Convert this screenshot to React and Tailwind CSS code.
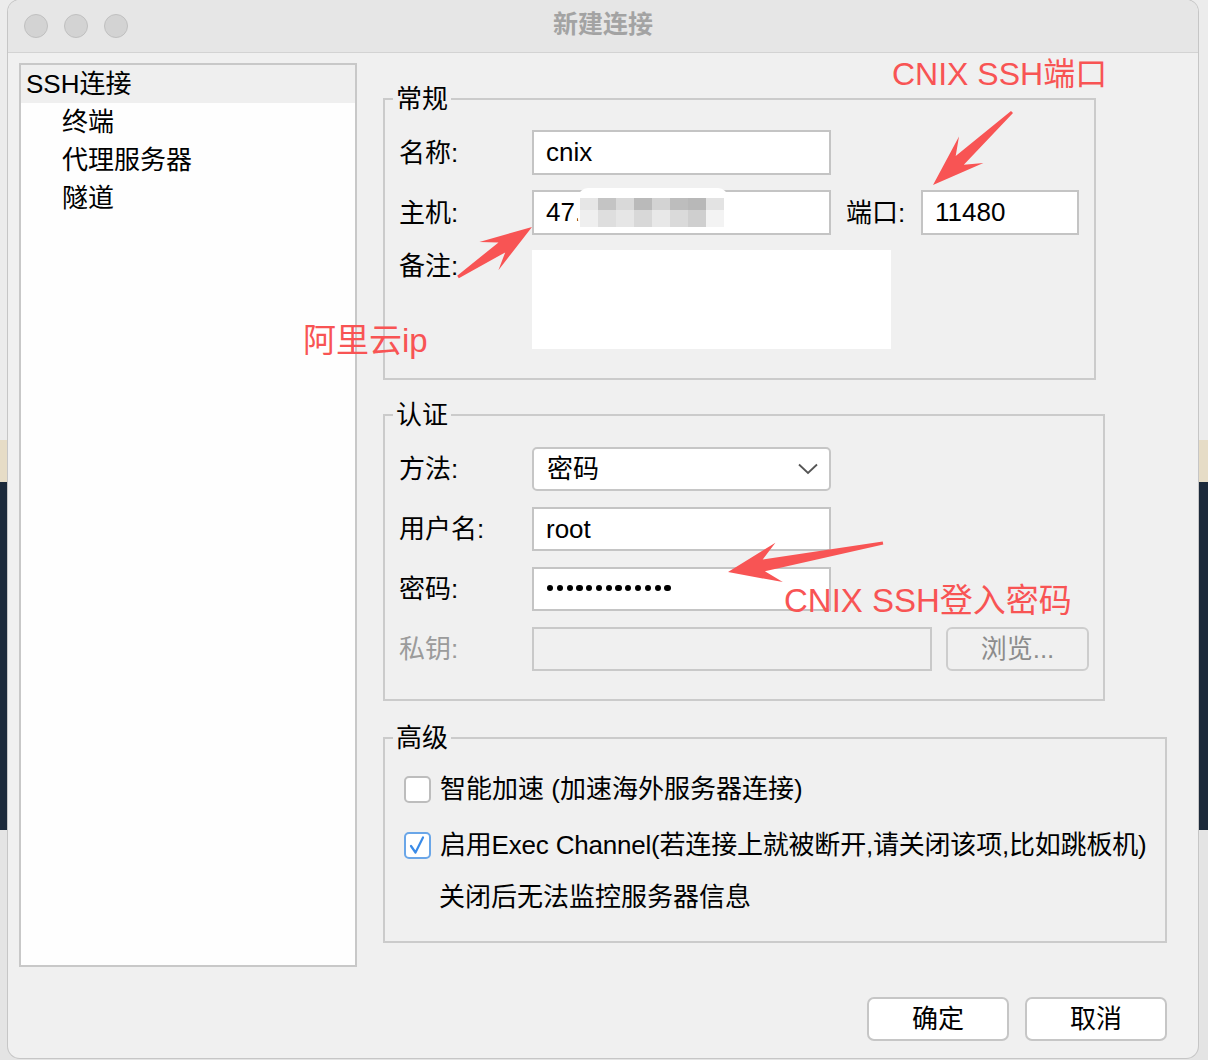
import React from "react";

const FONT = "font-['Liberation_Sans','Noto_Sans_CJK_SC',sans-serif]";
const RED = "#f85454";

// tapered annotation arrow, tail -> tip, in page coordinates
function arrowPoints(tail, tip, L = 52, W = 18, w = 6) {
  const dx = tip[0] - tail[0];
  const dy = tip[1] - tail[1];
  const len = Math.hypot(dx, dy);
  const ux = dx / len;
  const uy = dy / len;
  const nx = -uy;
  const ny = ux;
  const bx = tip[0] - ux * L;
  const by = tip[1] - uy * L;
  const kx = tip[0] - ux * L * 0.7;
  const ky = tip[1] - uy * L * 0.7;
  const pts = [
    [tail[0] + nx * 1.5, tail[1] + ny * 1.5],
    [kx + nx * w, ky + ny * w],
    [bx + nx * W, by + ny * W],
    tip,
    [bx - nx * W, by - ny * W],
    [kx - nx * w, ky - ny * w],
    [tail[0] - nx * 1.5, tail[1] - ny * 1.5],
  ];
  return pts.map((p) => p.map((v) => v.toFixed(1)).join(",")).join(" ");
}

const mosaicTop = ["#e6e6e6", "#c4c4c4", "#d9d9d9", "#bababa", "#d3d3d3", "#bdbdbd", "#b8b8b8", "#e3e3e3"];
const mosaicBottom = ["#efefef", "#dedede", "#e6e6e6", "#d8d8d8", "#e8e8e8", "#dadada", "#cfcfcf", "#f3f3f3"];

function TitleBar() {
  return (
    <div className="h-[53px] shrink-0 bg-[#e6e6e6] border-b border-[#d3d3d3] grid grid-cols-[1fr_auto_1fr] items-center">
      <div className="flex gap-[16px] pl-[16px]">
        {[0, 1, 2].map((i) => (
          <span key={i} className="w-[24px] h-[24px] rounded-full bg-[#d3d3d3] border border-[#c0c0c0]" />
        ))}
      </div>
      <div className="text-[25px] leading-[30px] font-semibold text-[#a3a3a3] -mt-[4px]">新建连接</div>
      <div />
    </div>
  );
}

function Sidebar() {
  const items = ["终端", "代理服务器", "隧道"];
  return (
    <div className="w-[338px] h-[904px] shrink-0 border-2 border-[#c8c8c8] bg-[#fefefe]">
      <div className="h-[38px] bg-[#efefef] pl-[5px] flex items-center text-[26px] text-black">SSH连接</div>
      {items.map((t) => (
        <div key={t} className="h-[38px] pl-[41px] flex items-center text-[26px] text-black">
          {t}
        </div>
      ))}
    </div>
  );
}

function Group({ title, className = "", children }) {
  return (
    <fieldset className={`border-2 border-[#cbcbcb] ${className}`}>
      <legend className="ml-[8px] px-[3px] text-[26px] leading-[30px] text-black">{title}</legend>
      {children}
    </fieldset>
  );
}

function Label({ children, gray = false, w = "w-[133px]" }) {
  return (
    <div className={`${w} shrink-0 text-[26px] leading-[30px] ${gray ? "text-[#9b9b9b]" : "text-black"}`}>
      {children}
    </div>
  );
}

function TextBox({ children, w = "w-[299px]", h = "h-[45px]", className = "" }) {
  return (
    <div className={`relative ${w} ${h} border-2 border-[#c4c4c4] bg-white pl-[12px] flex items-center text-[26px] text-black ${className}`}>
      {children}
    </div>
  );
}

function Mosaic() {
  return (
    <div className="absolute left-[44px] -top-[4px] w-[150px] h-[42px] rounded-[10px] bg-white pt-[10px] pl-[2px]">
      <div className="flex">
        {mosaicTop.map((c, i) => (
          <div key={i} className="w-[18px] h-[12px]" style={{ background: c }} />
        ))}
      </div>
      <div className="flex">
        {mosaicBottom.map((c, i) => (
          <div key={i} className="w-[18px] h-[17px]" style={{ background: c }} />
        ))}
      </div>
    </div>
  );
}

function General() {
  return (
    <Group title="常规" className="w-[713px]">
      <div className="pt-[16px] pb-[29px] pl-[14px] flex flex-col gap-[15px]">
        <div className="flex items-center h-[45px]">
          <Label>名称:</Label>
          <TextBox>cnix</TextBox>
        </div>
        <div className="flex items-center h-[45px]">
          <Label>主机:</Label>
          <TextBox>
            47.
            <Mosaic />
          </TextBox>
          <div className="ml-[15px] w-[75px] text-[26px] leading-[30px] text-black">端口:</div>
          <TextBox w="w-[158px]">11480</TextBox>
        </div>
        <div className="flex items-start h-[99px]">
          <div className="pt-[1px]">
            <Label>备注:</Label>
          </div>
          <div className="w-[359px] h-[99px] bg-white" />
        </div>
      </div>
    </Group>
  );
}

function Auth() {
  return (
    <Group title="认证" className="w-[722px] mt-[20px]">
      <div className="pt-[17px] pb-[28px] pl-[14px] flex flex-col gap-[16px]">
        <div className="flex items-center h-[44px]">
          <Label>方法:</Label>
          <div className="w-[299px] h-[44px] rounded-[5px] border-2 border-[#c6c6c6] bg-white pl-[13px] pr-[11px] flex items-center justify-between text-[26px] text-black">
            <span>密码</span>
            <svg width="20" height="12" viewBox="0 0 20 12" fill="none">
              <polyline points="1,1.5 10,10 19,1.5" stroke="#555" strokeWidth="1.8" />
            </svg>
          </div>
        </div>
        <div className="flex items-center h-[44px]">
          <Label>用户名:</Label>
          <TextBox h="h-[44px]">root</TextBox>
        </div>
        <div className="flex items-center h-[44px]">
          <Label>密码:</Label>
          <TextBox h="h-[44px]">
            <div className="flex gap-[3.6px] pl-[1px] mt-[-2px]">
              {Array.from({ length: 13 }).map((_, i) => (
                <span key={i} className="w-[6.2px] h-[6.2px] rounded-full bg-black" />
              ))}
            </div>
          </TextBox>
        </div>
        <div className="flex items-center h-[44px]">
          <Label gray>私钥:</Label>
          <div className="w-[400px] h-[44px] border-2 border-[#c9c9c9] bg-[#f0f0f0]" />
          <div className="ml-[14px] w-[143px] h-[44px] rounded-[6px] border-2 border-[#cdcdcd] bg-[#f0f0f0] flex items-center justify-center text-[26px] text-[#8c8c8c]">
            浏览...
          </div>
        </div>
      </div>
    </Group>
  );
}

function CheckBox({ checked }) {
  return (
    <div
      className={`w-[27px] h-[27px] shrink-0 rounded-[5px] border-2 bg-white flex items-center justify-center ${
        checked ? "border-[#6aa6e8]" : "border-[#bdbdbd]"
      }`}
    >
      {checked && (
        <svg width="23" height="23" viewBox="0 0 23 23" fill="none">
          <polyline points="5,12 9.5,18.5 17,3.5" stroke="#3a8be8" strokeWidth="2.2" strokeLinecap="round" strokeLinejoin="round" />
        </svg>
      )}
    </div>
  );
}

function Advanced() {
  return (
    <Group title="高级" className="w-[784px] mt-[22px]">
      <div className="pt-[16px] pb-[24px] pl-[19px] flex flex-col text-[26px] text-black">
        <div className="h-[40px] flex items-center gap-[9px]">
          <CheckBox />
          <span className="leading-[30px]">智能加速 (加速海外服务器连接)</span>
        </div>
        <div className="h-[40px] mt-[16px] flex items-center gap-[9px]">
          <CheckBox checked />
          <span className="leading-[30px] tracking-[-0.2px]">启用Exec Channel(若连接上就被断开,请关闭该项,比如跳板机)</span>
        </div>
        <div className="h-[40px] mt-[12px] flex items-center pl-[35px]">
          <span className="leading-[30px]">关闭后无法监控服务器信息</span>
        </div>
      </div>
    </Group>
  );
}

function Annotations() {
  return (
    <>
      <svg className="absolute left-0 top-0 pointer-events-none" width="1208" height="1060">
        <polygon points={arrowPoints([1012, 112], [933, 185], 52, 18, 6)} fill={RED} />
        <polygon points={arrowPoints([458, 277], [532, 227], 52, 17, 6)} fill={RED} />
        <polygon points={arrowPoints([883, 543], [728, 572], 52, 20, 6)} fill={RED} />
      </svg>
      <div className="absolute left-[892px] top-[58px] text-[32px] leading-[32px] text-[#f85454] whitespace-nowrap">CNIX SSH端口</div>
      <div className="absolute left-[303px] top-[324px] text-[33px] leading-[33px] text-[#f85454] whitespace-nowrap">阿里云ip</div>
      <div className="absolute left-[784px] top-[584px] text-[33px] leading-[33px] text-[#f85454] whitespace-nowrap">CNIX SSH登入密码</div>
    </>
  );
}

export default function App() {
  return (
    <div
      className={`relative w-[1208px] h-[1060px] overflow-hidden ${FONT} bg-[linear-gradient(to_bottom,#ececec_0px,#ececec_440px,#e6dcc6_440px,#e6dcc6_482px,#1c2a3b_482px,#1c2a3b_830px,#e4e4e4_830px)]`}
    >
      <div className="ml-[8px] w-[1190px] h-[1058px] rounded-[12px] overflow-hidden bg-[#f0f0f0] shadow-[0_0_0_1px_#c6c6c6] flex flex-col">
        <TitleBar />
        <div className="flex pt-[10px] pl-[11px]">
          <Sidebar />
          <div className="ml-[26px] mt-[21px] flex flex-col">
            <General />
            <Auth />
            <Advanced />
          </div>
        </div>
        <div className="mt-auto mb-[17px] pr-[31px] flex justify-end gap-[16px]">
          {["确定", "取消"].map((t) => (
            <button
              key={t}
              type="button"
              className="w-[142px] h-[44px] rounded-[7px] border-2 border-[#c6c6c6] bg-white text-[26px] text-black flex items-center justify-center"
            >
              {t}
            </button>
          ))}
        </div>
      </div>
      <Annotations />
    </div>
  );
}
